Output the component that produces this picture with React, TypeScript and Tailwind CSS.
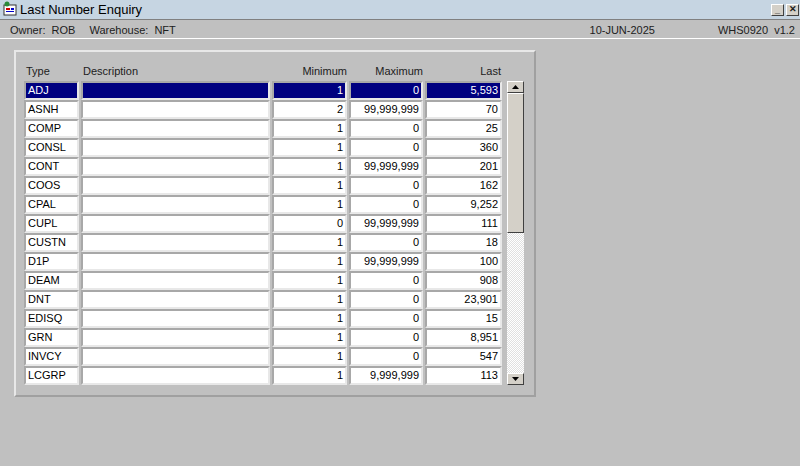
import React from "react";

const rows: [string, string, string, string][] = [
  ["ADJ", "1", "0", "5,593"],
  ["ASNH", "2", "99,999,999", "70"],
  ["COMP", "1", "0", "25"],
  ["CONSL", "1", "0", "360"],
  ["CONT", "1", "99,999,999", "201"],
  ["COOS", "1", "0", "162"],
  ["CPAL", "1", "0", "9,252"],
  ["CUPL", "0", "99,999,999", "111"],
  ["CUSTN", "1", "0", "18"],
  ["D1P", "1", "99,999,999", "100"],
  ["DEAM", "1", "0", "908"],
  ["DNT", "1", "0", "23,901"],
  ["EDISQ", "1", "0", "15"],
  ["GRN", "1", "0", "8,951"],
  ["INVCY", "1", "0", "547"],
  ["LCGRP", "1", "9,999,999", "113"],
];

function Cell({ w, sel, right, children }: { w: string; sel: boolean; right?: boolean; children?: React.ReactNode }) {
  return (
    <div
      className={`${w} h-[19px] border-2 border-t-[#a8a8a8] border-l-[#a8a8a8] border-b-[#e8e8e8] border-r-[#e8e8e8] px-[2px] flex items-center leading-none ${right ? "justify-end" : ""} ${sel ? "bg-[#000080] text-white" : "bg-white text-black"}`}
    >
      {children}
    </div>
  );
}

export default function App() {
  return (
    <div className="w-[800px] h-[466px] bg-[#c0c0c0] text-[11px] text-[#202020] flex flex-col overflow-hidden" style={{ fontFamily: '"Liberation Sans", Arial, sans-serif' }}>
      <div className="h-[19px] bg-[#c6d5e2] flex items-center">
        <svg width="16" height="16" viewBox="0 0 16 16" className="ml-[2px] -mt-[2px]">
          <rect x="2" y="4" width="12" height="10" fill="#fff" stroke="#333" />
          <rect x="4" y="7" width="4" height="2" fill="#c00" />
          <rect x="4" y="10" width="8" height="1" fill="#00c" />
          <rect x="9" y="7" width="3" height="2" fill="#00c" />
          <circle cx="5" cy="3" r="2.5" fill="#2a8a3a" />
        </svg>
        <span className="ml-[2px] text-[13px] text-black">Last Number Enquiry</span>
        <div className="ml-auto flex gap-[2px] mr-[1px]">
          <div className="w-[13px] h-[12px] bg-[#d4d0c8] border border-t-white border-l-white border-b-[#404040] border-r-[#404040] text-[9px] flex items-end justify-center leading-none font-bold">_</div>
          <div className="w-[13px] h-[12px] bg-[#d4d0c8] border border-t-white border-l-white border-b-[#404040] border-r-[#404040] text-[9px] flex items-center justify-center leading-none font-bold">✕</div>
        </div>
      </div>
      <div className="h-[19px] border-t border-[#808080] flex items-center pt-[3px] pl-[10px] pr-[5px]">
        <span>Owner:&nbsp;&nbsp;ROB</span>
        <span className="ml-[14px]">Warehouse:&nbsp;&nbsp;NFT</span>
        <span className="ml-auto mr-[63px]">10-JUN-2025</span>
        <span>WHS0920&nbsp;&nbsp;v1.2</span>
      </div>
      <div className="h-px bg-white" />
      <div className="pl-[14px] pt-[11px]">
        <div className="w-[522px] h-[347px] border-2 border-t-[#e8e8e8] border-l-[#e8e8e8] border-b-[#a0a0a0] border-r-[#a0a0a0] pl-[8px] pt-[9px]">
          <div className="flex h-[20px] items-center">
            <div className="w-[57px] pl-[2px]">Type</div>
            <div className="w-[191px] pl-[2px]">Description</div>
            <div className="w-[77px] text-right pr-[2px]">Minimum</div>
            <div className="w-[76px] text-right pr-[2px]">Maximum</div>
            <div className="w-[78px] text-right pr-[2px]">Last</div>
          </div>
          <div className="flex">
            <div className="flex flex-col">
              {rows.map((r, i) => (
                <div key={r[0]} className="flex gap-[2px]">
                  <Cell w="w-[55px]" sel={i === 0}>{r[0]}</Cell>
                  <Cell w="w-[189px]" sel={i === 0} />
                  <Cell w="w-[75px]" sel={i === 0} right>{r[1]}</Cell>
                  <Cell w="w-[74px]" sel={i === 0} right>{r[2]}</Cell>
                  <Cell w="w-[77px]" sel={i === 0} right>{r[3]}</Cell>
                </div>
              ))}
            </div>
            <div className="ml-[5px] w-[17px] h-[304px] flex flex-col">
              <div className="h-[12px] bg-[#d4d0c8] border border-t-white border-l-white border-b-[#404040] border-r-[#404040] flex items-center justify-center">
                <svg width="7" height="4"><polygon points="0,4 7,4 3.5,0" fill="#000" /></svg>
              </div>
              <div className="h-[140px] bg-[#d4d0c8] border border-t-white border-l-white border-b-[#404040] border-r-[#404040]" />
              <div className="flex-1 bg-[repeating-conic-gradient(#e0e0e0_0%_25%,#ffffff_0%_50%)] bg-[length:2px_2px]" />
              <div className="h-[12px] bg-[#d4d0c8] border border-t-white border-l-white border-b-[#404040] border-r-[#404040] flex items-center justify-center">
                <svg width="7" height="4"><polygon points="0,0 7,0 3.5,4" fill="#000" /></svg>
              </div>
            </div>
          </div>
        </div>
      </div>
    </div>
  );
}
